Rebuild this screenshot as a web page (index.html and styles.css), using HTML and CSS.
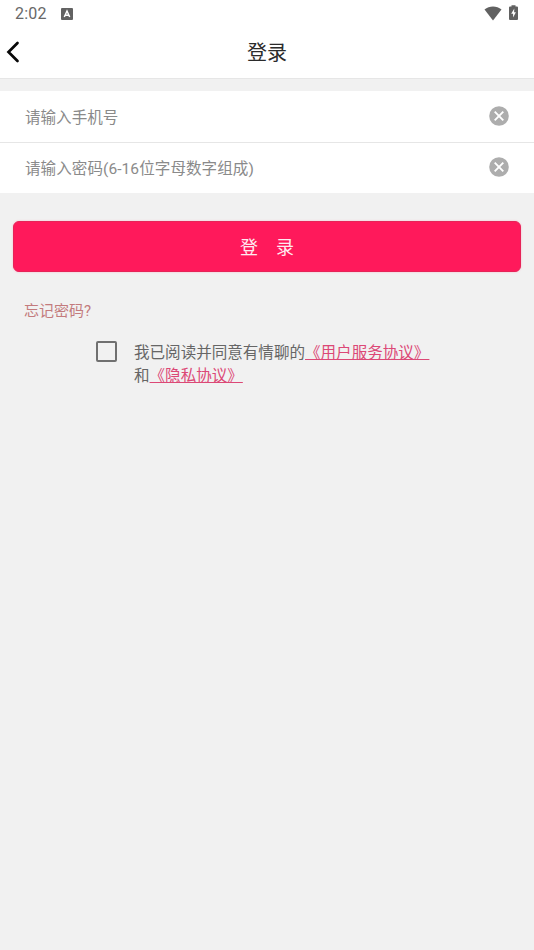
FILE: index.html
```html
<!DOCTYPE html>
<html lang="zh-CN">
<head>
<meta charset="utf-8">
<meta name="viewport" content="width=device-width, initial-scale=1">
<title>登录</title>
<link rel="stylesheet" href="styles.css">
</head>
<body>
<div class="status">
  <span class="time">2:02</span>
  <svg class="keyboard" width="12" height="12" viewBox="0 0 12 12"><rect width="12" height="12" rx="1" fill="#626262"/><path d="M3.3 9 6 3 8.7 9M4.2 7.2h3.6" fill="none" stroke="#fff" stroke-width="1.5"/></svg>
  <svg class="wifi" width="18" height="15" viewBox="0 0 18 15"><path d="M.5 3.6C5.3-.4 12.700-.4 17.500 3.600L9 14.500z" fill="#616161"/></svg>
  <svg class="battery" width="9" height="15" viewBox="0 0 9 15"><path d="M2.500 1.400V.3h4v1.100H8q1 0 1 1V14q0 1-1 1H1q-1 0-1-1V2.400q0-1 1-1z" fill="#616161"/><path d="M5.300 3.500 2.200 8.700h1.900v3.800L6.900 7.300H5.100z" fill="#fff"/></svg>
</div>
<header class="header">
  <svg class="back" width="14" height="24" viewBox="0 0 14 24"><path d="M11.500 3 2.500 12l9 9" fill="none" stroke="#080808" stroke-width="2.700" stroke-linecap="round"/></svg>
  <h1 class="title">登录</h1>
</header>
<main>
  <div class="fields">
    <div class="field">
      <span>请输入手机号</span>
      <svg width="20" height="20" viewBox="0 0 20 20"><circle cx="10" cy="10" r="9.800" fill="#adadad"/><path d="m5.700 5.700 8.600 8.600m0-8.600-8.600 8.600" stroke="#fff" stroke-width="1.900"/></svg>
    </div>
    <div class="field">
      <span class="hint">请输入密码(6-16位字母数字组成)</span>
      <svg width="20" height="20" viewBox="0 0 20 20"><circle cx="10" cy="10" r="9.800" fill="#adadad"/><path d="m5.700 5.700 8.600 8.600m0-8.600-8.600 8.600" stroke="#fff" stroke-width="1.900"/></svg>
    </div>
  </div>
  <button class="submit">登　录</button>
  <a class="forgot">忘记密码?</a>
  <div class="agreement">
    <span class="checkbox"></span>
    <p class="terms">我已阅读并同意有情聊的<a>《用户服务协议》</a><br>和<a>《隐私协议》</a></p>
  </div>
</main>
</body>
</html>
```
FILE: styles.css
```css
* {
  box-sizing: border-box;
}

body {
  margin: 0;
  min-height: 950px;
  background: #f1f1f1;
  font-family: Roboto, "Noto Sans CJK SC", sans-serif;
  font-size: 15.55px;
}

svg {
  display: block;
  flex: none;
}

.status {
  display: flex;
  align-items: center;
  height: 27px;
  padding: 0 16px 0 15px;
  background: #fff;
}

.time {
  width: 46px;
  font-size: 16px;
  line-height: 27px;
  letter-spacing: 0.2px;
  color: #686868;
}

.wifi {
  margin-top: -1px;
  margin-left: auto;
  margin-right: 7px;
}

.battery {
  margin-top: -2px;
}

.header {
  display: grid;
  grid-template-columns: 1fr auto 1fr;
  align-items: center;
  height: 52px;
  padding: 0 6px;
  background: #fff;
  border-bottom: 1px solid #e6e6e6;
}

.back {
  margin-top: -1px;
}

.title {
  margin: 0;
  font-size: 20px;
  font-weight: 400;
  line-height: 28px;
  color: #2b2b2b;
}

.fields {
  margin-top: 12px;
  background: #fff;
}

.field {
  display: flex;
  align-items: center;
  justify-content: space-between;
  height: 51px;
  padding: 0 25px 2px;
  color: #8a8a8a;
}

.field + .field {
  border-top: 1px solid #e6e6e6;
}

.hint {
  letter-spacing: 0.06px;
}

.submit {
  display: block;
  width: 508px;
  height: 51px;
  margin: 28px 13px 0;
  padding: 0 0 2px;
  border: 1px solid #e62458;
  border-radius: 6px;
  background: #ff195b;
  box-shadow: 0 0 2px #ffafc6;
  color: #ffeaf0;
  font: inherit;
  font-size: 18px;
}

.forgot {
  display: block;
  width: max-content;
  margin: 27px 0 0 24px;
  font-size: 15px;
  line-height: 24px;
  color: #c37b7d;
}

.agreement {
  display: flex;
  gap: 17px;
  margin: 18px 0 0 96px;
}

.checkbox {
  width: 21px;
  height: 21px;
  border: 2px solid #707070;
  border-radius: 2px;
}

.terms {
  margin: 1px 0 0;
  line-height: 23px;
  color: #666;
}

.terms a {
  color: #dc4876;
  text-decoration: underline;
  text-decoration-thickness: 1px;
}
```
